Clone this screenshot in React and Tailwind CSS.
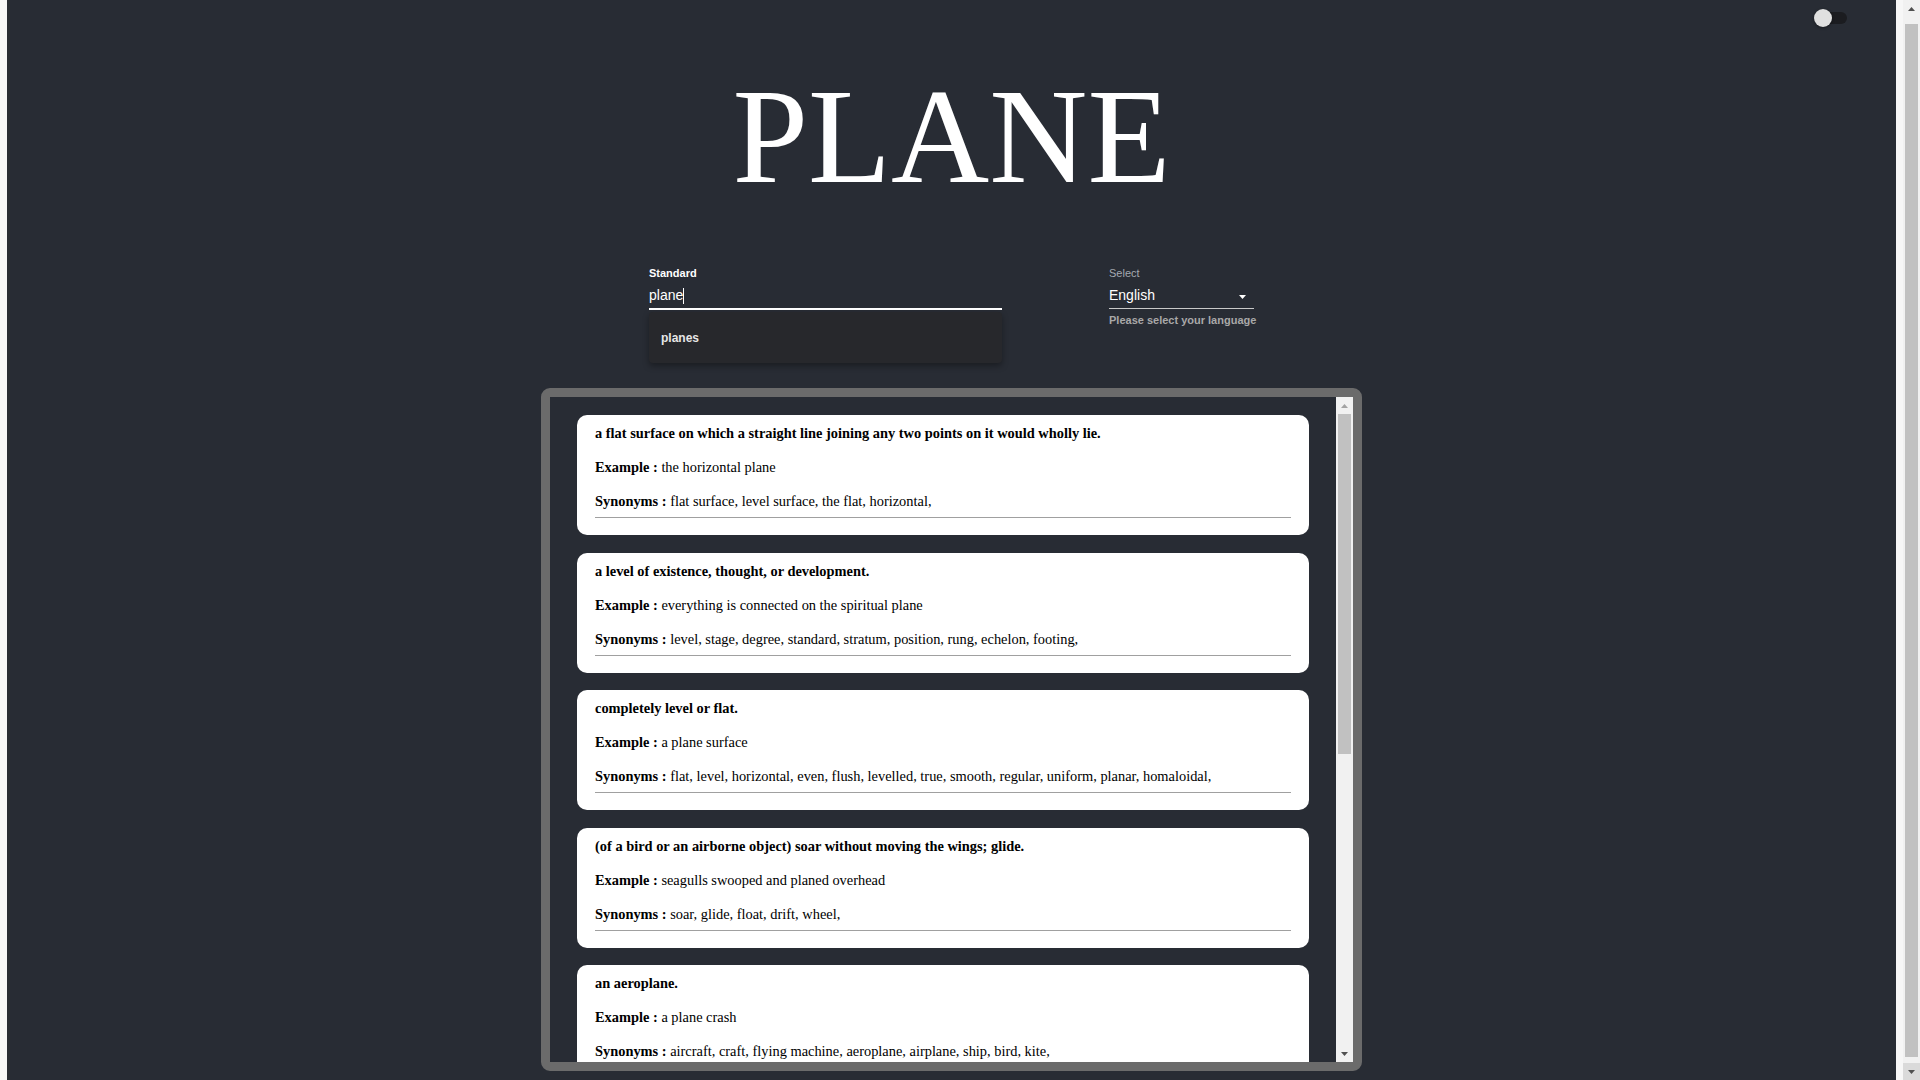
import React from 'react';

const meanings = [
    {
        definition: 'a flat surface on which a straight line joining any two points on it would wholly lie.',
        example: 'the horizontal plane',
        synonyms: ['flat surface', 'level surface', 'the flat', 'horizontal'],
    },
    {
        definition: 'a level of existence, thought, or development.',
        example: 'everything is connected on the spiritual plane',
        synonyms: ['level', 'stage', 'degree', 'standard', 'stratum', 'position', 'rung', 'echelon', 'footing'],
    },
    {
        definition: 'completely level or flat.',
        example: 'a plane surface',
        synonyms: ['flat', 'level', 'horizontal', 'even', 'flush', 'levelled', 'true', 'smooth', 'regular', 'uniform', 'planar', 'homaloidal'],
    },
    {
        definition: '(of a bird or an airborne object) soar without moving the wings; glide.',
        example: 'seagulls swooped and planed overhead',
        synonyms: ['soar', 'glide', 'float', 'drift', 'wheel'],
    },
    {
        definition: 'an aeroplane.',
        example: 'a plane crash',
        synonyms: ['aircraft', 'craft', 'flying machine', 'aeroplane', 'airplane', 'ship', 'bird', 'kite'],
    },
];

function Arrow({ up, color }) {
    return (
        <svg width="7" height="4" viewBox="0 0 7 4">
            <polygon points={up ? '0,4 7,4 3.5,0' : '0,0 7,0 3.5,4'} fill={color} />
        </svg>
    );
}

// classic scrollbar drawn as a widget
function Scrollbar({ thumbOffset, thumbHeight, upColor, downClass }) {
    return (
        <div className="w-[17px] shrink-0 flex flex-col bg-[#f1f1f1]">
            <div className="h-[17px] flex items-center justify-center">
                <Arrow up color={upColor} />
            </div>
            <div className="flex-1 px-[2px]">
                <div className="bg-[#c1c1c1]" style={{ marginTop: thumbOffset, height: thumbHeight }} />
            </div>
            <div className={`h-[17px] flex items-center justify-center ${downClass}`}>
                <Arrow color="#505050" />
            </div>
        </div>
    );
}

function Switch() {
    return (
        <div className="relative w-[33px] h-[18px]">
            <div className="absolute left-0 right-0 top-[3px] h-[12px] rounded-full bg-[#1b1c20]" />
            <div className="absolute left-0 top-0 w-[18px] h-[18px] rounded-full bg-[#e0e0e0] shadow-[0_1px_3px_rgba(0,0,0,0.4)]" />
        </div>
    );
}

function MeaningCard({ meaning }) {
    return (
        <div className="shrink-0 bg-white rounded-[10px] px-[18px] pt-[10px] pb-[17px] text-black text-[14.4px] leading-[17px] font-['Liberation_Serif',serif]">
            <p className="font-bold whitespace-nowrap">{meaning.definition}</p>
            <p className="mt-[17px]">
                <strong>Example :</strong> {meaning.example}
            </p>
            <p className="mt-[17px] whitespace-nowrap">
                <strong>Synonyms :</strong> {meaning.synonyms.map((s) => `${s}, `).join('').trimEnd()}
            </p>
            <hr className="mt-[7px] border-t border-[#a0a0a0]" />
        </div>
    );
}

export default function App() {
    return (
        <div className="h-screen overflow-hidden flex bg-[#f7f7f7]">
            <div className="flex-1 min-w-0 px-[7px]">
                <div className="min-h-full bg-[#282c34] pb-[22px] font-['Liberation_Sans',Arial,sans-serif]">
                    <div className="flex justify-end pt-[9px] pr-[49px]">
                        <Switch />
                    </div>

                    <h1 className="mt-[41px] text-center text-[136px] leading-none font-normal text-white font-['Liberation_Serif',serif]">
                        PLANE
                    </h1>

                    <div className="mt-[63px] flex justify-center gap-[107px]">
                        {/* search field */}
                        <div className="relative w-[353px]">
                            <label className="block text-[11px] leading-[13px] font-semibold text-white">Standard</label>
                            <div className="mt-[7px] h-[23px] border-b-2 border-white">
                                <div className="flex items-center h-[17px] text-[14px] text-white">
                                    plane
                                    <span className="inline-block w-px h-[16px] bg-white" />
                                </div>
                            </div>
                            <div className="absolute left-0 right-0 top-[45px] h-[51px] flex items-center pl-[12px] rounded-[4px] bg-[#27282c] shadow-[0_3px_6px_rgba(0,0,0,0.35)]">
                                <span className="text-[12px] font-bold text-[#e6e6e6]">planes</span>
                            </div>
                        </div>

                        {/* language select */}
                        <div className="w-[145px]">
                            <label className="block text-[11px] leading-[13px] text-[#a4a9b0]">Select</label>
                            <div className="mt-[7px] h-[22px] border-b border-[#c9c9c9] flex items-start justify-between pr-[8px]">
                                <span className="text-[14px] leading-[17px] text-white">English</span>
                                <svg width="7" height="4" viewBox="0 0 7 4" className="mt-[8px]">
                                    <polygon points="0,0 7,0 3.5,4" fill="#ffffff" />
                                </svg>
                            </div>
                            <p className="mt-[5px] text-[11px] leading-[13px] font-semibold text-[#a8a8a8] whitespace-nowrap">
                                Please select your language
                            </p>
                        </div>
                    </div>

                    <div className="mx-auto mt-[61px] w-[821px] h-[683px] border-[9px] border-[#6b6b6b] rounded-[9px] overflow-hidden flex">
                        <div className="flex-1 min-w-0 overflow-hidden flex flex-col gap-[17.5px] px-[27px] py-[18px]">
                            {meanings.map((m, i) => (
                                <MeaningCard key={i} meaning={m} />
                            ))}
                        </div>
                        <Scrollbar thumbOffset={0} thumbHeight={340} upColor="#a3a3a3" downClass="" />
                    </div>
                </div>
            </div>
            <Scrollbar thumbOffset={7} thumbHeight={1033} upColor="#505050" downClass="bg-[#dadada]" />
        </div>
    );
}
